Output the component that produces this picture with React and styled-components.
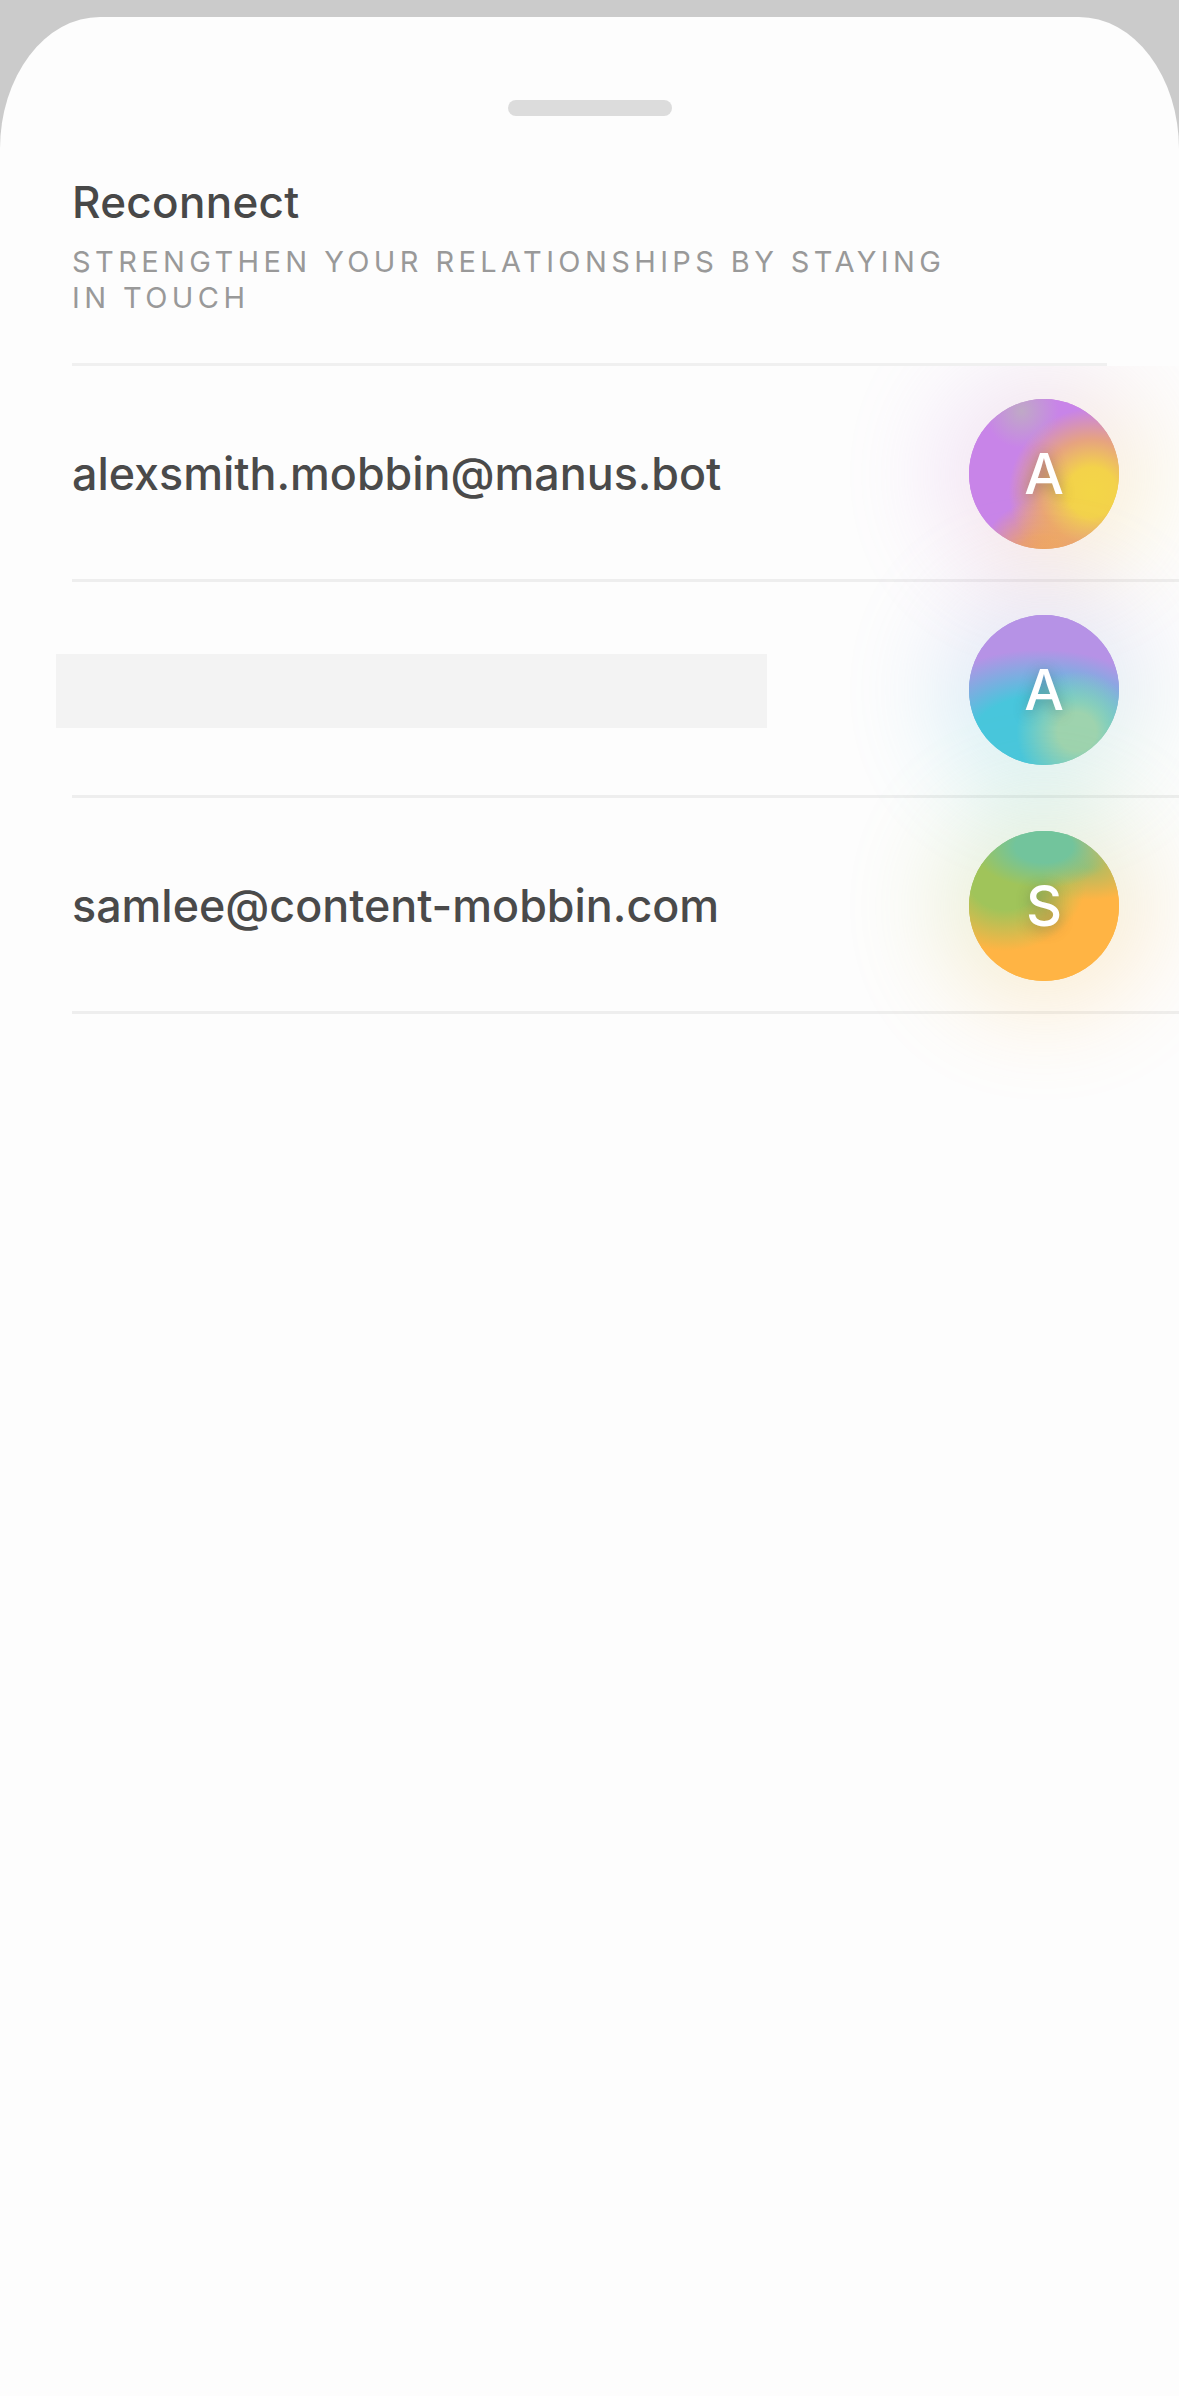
import React from 'react';
import styled, { createGlobalStyle } from 'styled-components';

const GlobalStyle = createGlobalStyle`
    html, body {
        margin: 0;
        padding: 0;
        background-color: #cbcbcb;
    }
    body {
        font-family: Inter, "Liberation Sans", sans-serif;
    }
`;

const Page = styled.div`
    width: 1179px;
    height: 2396px;
    padding-top: 17px;
    box-sizing: border-box;
    overflow: hidden;
`;

const Sheet = styled.main`
    height: 100%;
    padding-top: 83px;
    box-sizing: border-box;
    background-color: #fdfdfd;
    border-radius: 100px 100px 0 0 / 132px 132px 0 0;
`;

const Handle = styled.div`
    width: 164px;
    height: 16px;
    margin: 0 auto;
    border-radius: 8px;
    background-color: #dcdcdc;
`;

const Header = styled.header`
    margin: 60px 72px 0 72px;
    padding-bottom: 47px;
    border-bottom: 3px solid #f0f0f0;
`;

const Title = styled.h1`
    margin: 0;
    font-size: 44px;
    line-height: 52px;
    font-weight: 500;
    letter-spacing: 0.3px;
    color: #484848;
`;

const Subtitle = styled.p`
    max-width: 900px;
    margin: 16px 0 0;
    font-size: 29px;
    line-height: 36px;
    font-weight: 400;
    letter-spacing: 4.4px;
    text-transform: uppercase;
    color: #999999;
`;

const List = styled.ul`
    margin: 0;
    padding: 0 0 120px;
    list-style: none;
    overflow: hidden;
`;

const Row = styled.li`
    height: 213px;
    margin-left: 72px;
    padding-right: 60px;
    border-bottom: 3px solid #eeeeee;
    display: flex;
    align-items: center;
    justify-content: space-between;
`;

const Email = styled.span`
    margin-top: 3px;
    font-size: 44.8px;
    font-weight: 500;
    color: #4a4a4a;
`;

const Redacted = styled.div`
    width: 711px;
    height: 74px;
    margin: 5px 0 0 -16px;
    background-color: #f3f3f3;
`;

const Avatar = styled.div`
    position: relative;
    width: 150px;
    height: 150px;
    flex-shrink: 0;
    margin-top: 2px;
    border-radius: 50%;
    background: ${(props) => props.$colors};
    display: flex;
    align-items: center;
    justify-content: center;

    &::before {
        content: '';
        position: absolute;
        inset: -30px;
        z-index: 0;
        border-radius: 50%;
        background: ${(props) => props.$colors};
        filter: blur(50px);
        opacity: 0.24;
    }

    &::after {
        content: '';
        position: absolute;
        inset: 0;
        border-radius: 50%;
        background: ${(props) => props.$colors};
    }
`;

const Initial = styled.span`
    position: relative;
    z-index: 1;
    font-size: 56px;
    font-weight: 500;
    color: #ffffff;
    text-shadow: 0 3px 14px rgba(70, 70, 70, 0.4);
`;

const purple =
    'radial-gradient(circle at 35% 8%, #bfa9c6 0, rgba(191,169,198,0) 22%),' +
    'radial-gradient(circle at 82% 62%, #f3d647 0, #f3d24a 16%, rgba(243,176,84,0.7) 34%, rgba(240,160,110,0) 54%),' +
    'radial-gradient(circle at 48% 108%, #f2a654 0, rgba(242,166,84,0.8) 14%, rgba(242,166,84,0) 34%),' +
    '#c884e8';

const cyan =
    'radial-gradient(circle at 72% 78%, #9ed3ae 0, #9ed3ae 12%, rgba(158,211,174,0) 38%),' +
    'radial-gradient(ellipse 95% 62% at 48% 85%, #48c6dc 0, #48c6dc 50%, rgba(72,198,220,0) 100%),' +
    '#b692e6';

const orange =
    'radial-gradient(ellipse 48% 28% at 50% 10%, #72c49c 0, #72c49c 40%, rgba(114,196,156,0) 100%),' +
    'radial-gradient(ellipse 55% 50% at 24% 30%, #a0c45a 0, #a0c45a 45%, rgba(160,196,90,0) 100%),' +
    'radial-gradient(ellipse 45% 22% at 78% 24%, #a9bd64 0, rgba(169,189,100,0) 100%),' +
    '#ffb444';

const App = () => {
    return (
        <>
            <GlobalStyle />
            <Page>
                <Sheet>
                    <Handle />
                    <Header>
                        <Title>Reconnect</Title>
                        <Subtitle>Strengthen your relationships by staying in touch</Subtitle>
                    </Header>
                    <List>
                        <Row>
                            <Email>alexsmith.mobbin@manus.bot</Email>
                            <Avatar $colors={purple}>
                                <Initial>A</Initial>
                            </Avatar>
                        </Row>
                        <Row>
                            <Redacted />
                            <Avatar $colors={cyan}>
                                <Initial>A</Initial>
                            </Avatar>
                        </Row>
                        <Row>
                            <Email>samlee@content-mobbin.com</Email>
                            <Avatar $colors={orange}>
                                <Initial>S</Initial>
                            </Avatar>
                        </Row>
                    </List>
                </Sheet>
            </Page>
        </>
    );
};

export default App;
